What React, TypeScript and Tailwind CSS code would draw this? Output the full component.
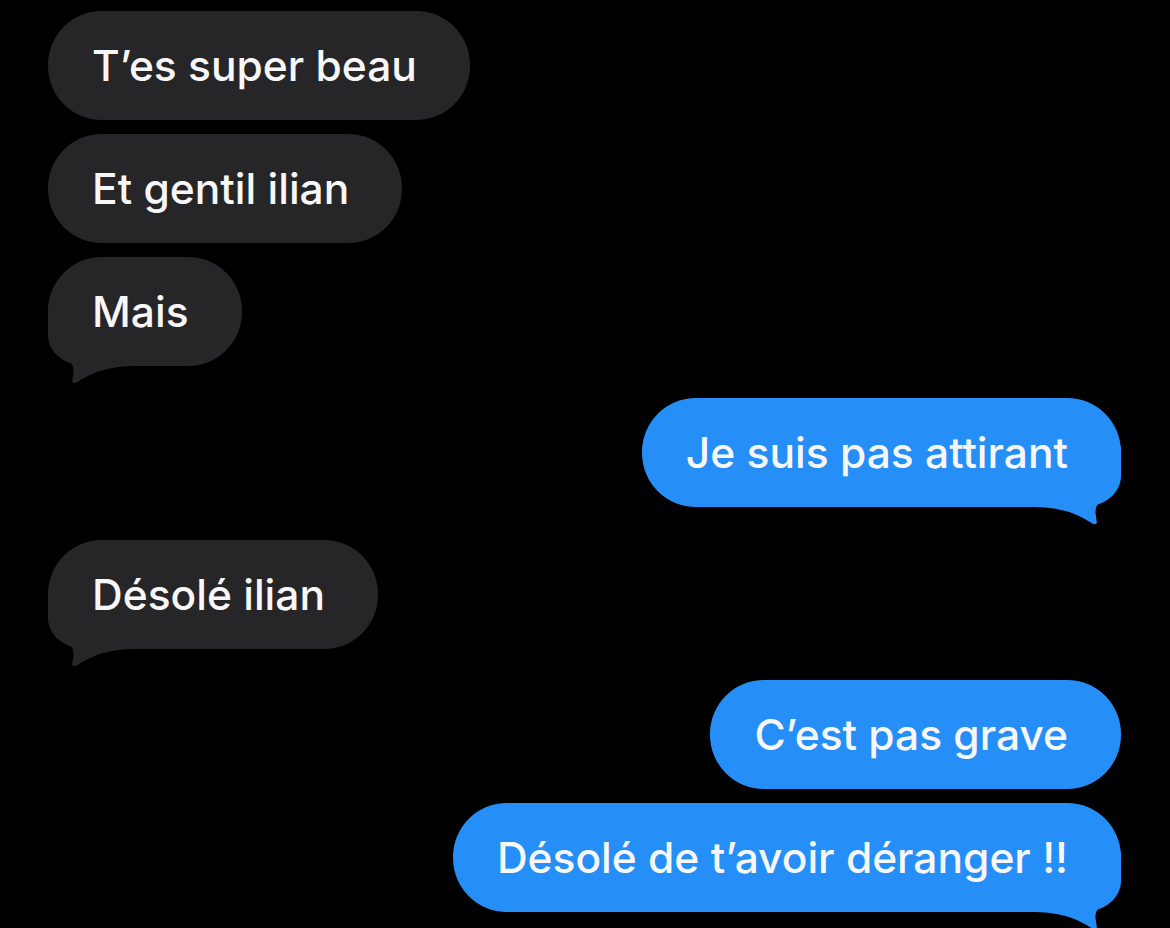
const messages = [
  { id: 1, text: "T’es super beau", me: false, tail: false, gap: "mt-[11px]" },
  { id: 2, text: "Et gentil ilian", me: false, tail: false, gap: "mt-[14px]" },
  { id: 3, text: "Mais", me: false, tail: true, gap: "mt-[14px]" },
  { id: 4, text: "Je suis pas attirant", me: true, tail: true, gap: "mt-[32px]" },
  { id: 5, text: "Désolé ilian", me: false, tail: true, gap: "mt-[33px]" },
  { id: 6, text: "C’est pas grave", me: true, tail: false, gap: "mt-[31px]" },
  { id: 7, text: "Désolé de t’avoir déranger !!", me: true, tail: true, gap: "mt-[14px]" },
];

const Tail = ({ me }: { me: boolean }) => {
  // bubble tail, drawn for the left side and mirrored for the right
  return (
    <svg
      width="90"
      height="80"
      viewBox="0 0 90 80"
      className={`absolute bottom-[-20px] ${me ? "right-0 -scale-x-100" : "left-0"}`}
    >
      <path
        d="M0 0 L0 29 C0 42 10 53 22 57 C25 58 25.5 62 25.5 66 L24.5 73 C23.5 76 25 78.5 28.5 76.5 C36 72 48 65 60 63 C68 61 76 60 90 60 L90 0 Z"
        fill={me ? "#258ff7" : "#262628"}
      />
    </svg>
  );
};

export default function App() {
  return (
    <div className="w-[1170px] h-[928px] bg-black overflow-hidden font-['Inter','Liberation_Sans',sans-serif]">
      <div className="flex flex-col pl-[48px] pr-[49px]">
        {messages.map((m) => (
          <div key={m.id} className={`flex ${m.me ? "justify-end" : "justify-start"} ${m.gap}`}>
            <div
              className={`relative h-[109px] flex items-center pl-[44px] pr-[53px] rounded-[54px] text-[42.5px] font-medium text-[#f7f7f7] ${
                m.me ? "bg-[#258ff7]" : "bg-[#262628]"
              }`}
            >
              {m.tail && <Tail me={m.me} />}
              <span className="relative">{m.text}</span>
            </div>
          </div>
        ))}
      </div>
    </div>
  );
}
